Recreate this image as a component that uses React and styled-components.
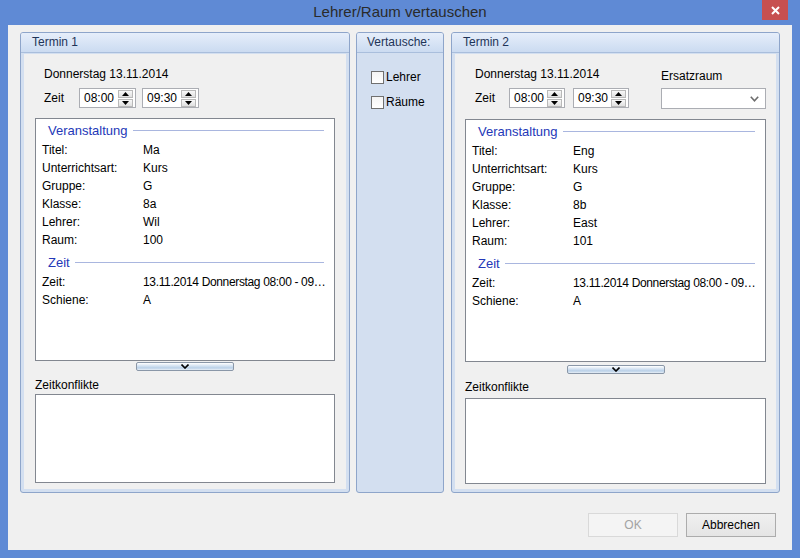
import React from "react";
import styled, { createGlobalStyle } from "styled-components";

const Global = createGlobalStyle`
  html, body { margin: 0; padding: 0; }
  body { font-family: "Liberation Sans", Arial, sans-serif; font-size: 12px; color: #000; }
  * { box-sizing: border-box; }
`;

const Window = styled.div`
  width: 800px;
  height: 558px;
  background: #5f8ad5;
  display: flex;
  flex-direction: column;
`;

const TitleBar = styled.div`
  height: 25px;
  display: grid;
  grid-template-columns: 1fr auto 1fr;
  align-items: start;
`;

const Title = styled.div`
  grid-column: 2;
  font-size: 15px;
  line-height: 24px;
  color: #2a2a2a;
`;

const CloseBtn = styled.div`
  grid-column: 3;
  justify-self: end;
  margin-right: 12px;
  width: 26px;
  height: 20px;
  background: #c75050;
  display: flex;
  align-items: center;
  justify-content: center;
`;

const Client = styled.div`
  flex: 1;
  margin: 0 8px 8px 8px;
  background: #f0f0f0;
  display: flex;
  flex-direction: column;
`;

const PanelsRow = styled.div`
  display: flex;
  padding: 7px 12px 0 12px;
  gap: 6px;
`;

const Panel = styled.div`
  width: ${(p) => p.$w}px;
  margin-left: ${(p) => p.$ml || 0}px;
  height: 461px;
  border: 1px solid #8ea5ca;
  border-radius: 3px;
  background: #d3dff0;
  display: flex;
  flex-direction: column;
  overflow: hidden;
`;

const PanelHeader = styled.div`
  height: 20px;
  line-height: 19px;
  padding-left: ${(p) => p.$pl}px;
  background: linear-gradient(#e6eefa, #cbdbf1);
  border-bottom: 1px solid #a9bedc;
  color: #1e3458;
  font-size: 12px;
`;

const PanelBody = styled.div`
  flex: 1;
  margin: 1px 3px 3px 3px;
  background: ${(p) => (p.$plain ? "transparent" : "#f0f0f0")};
  display: flex;
  flex-direction: column;
  padding: ${(p) => p.$pad};
`;

const TopArea = styled.div`
  display: flex;
  justify-content: space-between;
  align-items: flex-start;
`;

const Col = styled.div`
  display: flex;
  flex-direction: column;
  padding-left: ${(p) => p.$pl || 0}px;
`;

const DateText = styled.div`
  margin-top: ${(p) => p.$mt}px;
  height: 14px;
  line-height: 14px;
`;

const TimeRow = styled.div`
  display: flex;
  align-items: center;
  margin-top: 7px;
  gap: ${(p) => p.$gap}px;
`;

const TimeLabel = styled.div`
  width: ${(p) => p.$w}px;
`;

const SpinBox = styled.div`
  width: ${(p) => p.$w}px;
  height: 20px;
  border: 1px solid #abadb3;
  background: #fff;
  display: flex;
  align-items: center;
`;

const SpinText = styled.div`
  flex: 1;
  padding-left: 4px;
  font-size: 12px;
`;

const SpinButtons = styled.div`
  width: 15px;
  margin-right: 2px;
  display: flex;
  flex-direction: column;
  gap: 1px;
`;

const SpinBtn = styled.div`
  height: 8px;
  border: 1px solid #b9b9b9;
  background: linear-gradient(#f8f8f8, #e0e0e0);
  display: flex;
  align-items: center;
  justify-content: center;
`;

const FieldLabel = styled.div`
  margin-top: ${(p) => p.$mt}px;
  height: 14px;
  line-height: 14px;
`;

const Combo = styled.div`
  width: 105px;
  height: 21px;
  margin-top: 5px;
  border: 1px solid #abadb3;
  background: #fff;
  display: flex;
  align-items: center;
  justify-content: flex-end;
  padding-right: 6px;
`;

const DetailsBox = styled.div`
  margin-top: 10px;
  height: 243px;
  border: 1px solid #828790;
  background: #fff;
  padding: 2px 0 0 6px;
  display: flex;
  flex-direction: column;
  overflow: hidden;
`;

const SectionHead = styled.div`
  display: flex;
  align-items: center;
  height: 18px;
  margin-top: ${(p) => p.$mt || 0}px;
  margin-bottom: 2px;
  padding-left: 6px;
  padding-right: 10px;
`;

const SectionTitle = styled.div`
  color: #2438b8;
  font-size: 13px;
`;

const SectionLine = styled.div`
  flex: 1;
  height: 1px;
  margin-left: 5px;
  background: #a9b6df;
`;

const Row = styled.div`
  display: flex;
  height: 18px;
  line-height: 18px;
`;

const RowLabel = styled.div`
  width: 101px;
  flex-shrink: 0;
`;

const RowValue = styled.div`
  white-space: nowrap;
  letter-spacing: ${(p) => (p.$tight ? "-0.35px" : "normal")};
`;

const ExpandBtn = styled.div`
  align-self: center;
  width: 98px;
  height: 9px;
  margin-top: ${(p) => p.$mt}px;
  border: 1px solid #8a97a8;
  border-radius: 2px;
  background: linear-gradient(#ffffff 0%, #dbe7f4 35%, #b9d0e8 70%, #e8eff7 100%);
  display: flex;
  align-items: center;
  justify-content: center;
`;

const ConflictBox = styled.div`
  margin-top: ${(p) => p.$mt}px;
  height: ${(p) => p.$h}px;
  border: 1px solid #828790;
  background: #fff;
`;

const CheckRow = styled.label`
  display: flex;
  align-items: center;
  gap: 2px;
  height: 14px;
  margin-bottom: 11px;
`;

const CheckBox = styled.span`
  width: 13px;
  height: 13px;
  border: 1px solid #707070;
  background: linear-gradient(#f4f4f4, #ffffff);
`;

const Footer = styled.div`
  display: flex;
  justify-content: flex-end;
  gap: 8px;
  padding: 20px 16px 0 0;
`;

const Button = styled.div`
  width: 90px;
  height: 24px;
  display: flex;
  align-items: center;
  justify-content: center;
  font-size: 12px;
  border: 1px solid ${(p) => (p.$disabled ? "#d9d9d9" : "#acacac")};
  background: ${(p) => (p.$disabled ? "#f4f4f4" : "linear-gradient(#f0f0f0, #e5e5e5)")};
  color: ${(p) => (p.$disabled ? "#a3a3a3" : "#000")};
`;

const Up = () => (
  <svg width="7" height="4" viewBox="0 0 7 4"><path d="M0 4 L3.5 0 L7 4 Z" fill="#000" /></svg>
);
const Down = () => (
  <svg width="7" height="4" viewBox="0 0 7 4"><path d="M0 0 L3.5 4 L7 0 Z" fill="#000" /></svg>
);

const Spinner = ({ value, w = 57 }) => (
  <SpinBox $w={w}>
    <SpinText>{value}</SpinText>
    <SpinButtons>
      <SpinBtn><Up /></SpinBtn>
      <SpinBtn><Down /></SpinBtn>
    </SpinButtons>
  </SpinBox>
);

const Details = ({ d }) => (
  <DetailsBox>
    <SectionHead>
      <SectionTitle>Veranstaltung</SectionTitle>
      <SectionLine />
    </SectionHead>
    {[
      ["Titel:", d.titel],
      ["Unterrichtsart:", "Kurs"],
      ["Gruppe:", "G"],
      ["Klasse:", d.klasse],
      ["Lehrer:", d.lehrer],
      ["Raum:", d.raum],
    ].map(([l, v]) => (
      <Row key={l}>
        <RowLabel>{l}</RowLabel>
        <RowValue>{v}</RowValue>
      </Row>
    ))}
    <SectionHead $mt={4}>
      <SectionTitle>Zeit</SectionTitle>
      <SectionLine />
    </SectionHead>
    <Row>
      <RowLabel>Zeit:</RowLabel>
      <RowValue $tight>13.11.2014 Donnerstag 08:00 - 09…</RowValue>
    </Row>
    <Row>
      <RowLabel>Schiene:</RowLabel>
      <RowValue>A</RowValue>
    </Row>
  </DetailsBox>
);

const Chevron = () => (
  <svg width="8" height="5" viewBox="0 0 8 5">
    <path d="M0.5 0.5 L4 4 L7.5 0.5" fill="none" stroke="#000" strokeWidth="1.6" />
  </svg>
);

export default function App() {
  return (
    <>
      <Global />
      <Window>
        <TitleBar>
          <Title>Lehrer/Raum vertauschen</Title>
          <CloseBtn>
            <svg width="9" height="9" viewBox="0 0 9 9">
              <path d="M1 1 L8 8 M8 1 L1 8" stroke="#fff" strokeWidth="2" />
            </svg>
          </CloseBtn>
        </TitleBar>
        <Client>
          <PanelsRow>
            <Panel $w={330}>
              <PanelHeader $pl={11}>Termin 1</PanelHeader>
              <PanelBody $pad="0 11px 0 11px">
                <Col $pl={9}>
                  <DateText $mt={13}>Donnerstag 13.11.2014</DateText>
                  <TimeRow $gap={6}>
                    <TimeLabel $w={29}>Zeit</TimeLabel>
                    <Spinner value="08:00" />
                    <Spinner value="09:30" />
                  </TimeRow>
                </Col>
                <Details d={{ titel: "Ma", klasse: "8a", lehrer: "Wil", raum: "100" }} />
                <ExpandBtn $mt={1}><Chevron /></ExpandBtn>
                <FieldLabel $mt={7}>Zeitkonflikte</FieldLabel>
                <ConflictBox $mt={2} $h={89} />
              </PanelBody>
            </Panel>
            <Panel $w={88}>
              <PanelHeader $pl={10}>Vertausche:</PanelHeader>
              <PanelBody $plain $pad="16px 0 0 11px">
                <CheckRow><CheckBox />Lehrer</CheckRow>
                <CheckRow><CheckBox />Räume</CheckRow>
              </PanelBody>
            </Panel>
            <Panel $w={329} $ml={1}>
              <PanelHeader $pl={11}>Termin 2</PanelHeader>
              <PanelBody $pad="0 10px 0 10px">
                <TopArea>
                  <Col $pl={10}>
                    <DateText $mt={13}>Donnerstag 13.11.2014</DateText>
                    <TimeRow $gap={8}>
                      <TimeLabel $w={26}>Zeit</TimeLabel>
                      <Spinner value="08:00" w={56} />
                      <Spinner value="09:30" w={56} />
                    </TimeRow>
                  </Col>
                  <Col>
                    <FieldLabel $mt={15}>Ersatzraum</FieldLabel>
                    <Combo>
                      <svg width="9" height="6" viewBox="0 0 9 6">
                        <path d="M0.8 0.8 L4.5 4.8 L8.2 0.8" fill="none" stroke="#6d6d6d" strokeWidth="1.6" />
                      </svg>
                    </Combo>
                  </Col>
                </TopArea>
                <Details d={{ titel: "Eng", klasse: "8b", lehrer: "East", raum: "101" }} />
                <ExpandBtn $mt={3}><Chevron /></ExpandBtn>
                <FieldLabel $mt={6}>Zeitkonflikte</FieldLabel>
                <ConflictBox $mt={4} $h={86} />
              </PanelBody>
            </Panel>
          </PanelsRow>
          <Footer>
            <Button $disabled>OK</Button>
            <Button>Abbrechen</Button>
          </Footer>
        </Client>
      </Window>
    </>
  );
}
